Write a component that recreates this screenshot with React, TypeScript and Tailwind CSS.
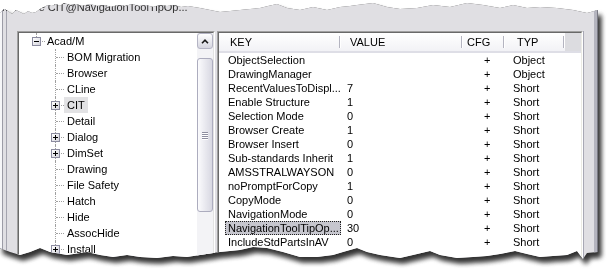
import React from "react";

type TreeItem = { label: string; level: 0 | 1; box?: "plus" | "minus"; hl?: boolean };

const tree: TreeItem[] = [
  { label: "Acad/M", level: 0, box: "minus" },
  { label: "BOM Migration", level: 1 },
  { label: "Browser", level: 1 },
  { label: "CLine", level: 1 },
  { label: "CIT", level: 1, box: "plus", hl: true },
  { label: "Detail", level: 1 },
  { label: "Dialog", level: 1, box: "plus" },
  { label: "DimSet", level: 1, box: "plus" },
  { label: "Drawing", level: 1 },
  { label: "File Safety", level: 1 },
  { label: "Hatch", level: 1 },
  { label: "Hide", level: 1 },
  { label: "AssocHide", level: 1 },
  { label: "Install", level: 1, box: "plus" },
];

const rows: { k: string; v: string; t: string; sel?: boolean }[] = [
  { k: "ObjectSelection", v: "", t: "Object" },
  { k: "DrawingManager", v: "", t: "Object" },
  { k: "RecentValuesToDispl...", v: "7", t: "Short" },
  { k: "Enable Structure", v: "1", t: "Short" },
  { k: "Selection Mode", v: "0", t: "Short" },
  { k: "Browser Create", v: "1", t: "Short" },
  { k: "Browser Insert", v: "0", t: "Short" },
  { k: "Sub-standards Inherit", v: "1", t: "Short" },
  { k: "AMSSTRALWAYSON", v: "0", t: "Short" },
  { k: "noPromptForCopy", v: "1", t: "Short" },
  { k: "CopyMode", v: "0", t: "Short" },
  { k: "NavigationMode", v: "0", t: "Short" },
  { k: "NavigationToolTipOp...", v: "30", t: "Short", sel: true },
  { k: "IncludeStdPartsInAV", v: "0", t: "Short" },
];

function Box({ kind }: { kind: "plus" | "minus" }) {
  return (
    <div className="absolute left-[5px] top-[4px] w-[9px] h-[9px] border border-[#8c8ca0] bg-gradient-to-br from-white to-[#d4d4dc]">
      <div className="absolute left-[1px] top-[3px] w-[5px] h-px bg-black" />
      {kind === "plus" && <div className="absolute left-[3px] top-[1px] w-px h-[5px] bg-black" />}
    </div>
  );
}

function TreeRow({ item }: { item: TreeItem }) {
  const root = item.level === 0;
  return (
    <div className="flex h-[16px] items-stretch">
      <div className={root ? "w-[8px] shrink-0" : "w-[27px] shrink-0"} />
      <div className="relative w-[18px] shrink-0">
        <div
          className={
            root
              ? "absolute left-[9px] top-0 h-[8px] border-l border-dotted border-[#a0a0a0]"
              : "absolute left-[9px] top-0 bottom-0 border-l border-dotted border-[#a0a0a0]"
          }
        />
        <div className="absolute left-[10px] right-0 top-[8px] border-t border-dotted border-[#a0a0a0]" />
        {item.box && <Box kind={item.box} />}
      </div>
      <span
        className={
          (root ? "pl-[2px] pr-[3px]" : "pl-[3px] pr-[3px]") +
          " leading-[16px] whitespace-nowrap text-black" +
          (item.hl ? " bg-[#e2e2e4]" : "")
        }
      >
        {item.label}
      </span>
    </div>
  );
}

function Sep() {
  return (
    <div className="w-[2px] h-[12px] self-center shrink-0 border-l border-[#b4b4c0] bg-white" />
  );
}

export default function App() {
  return (
    <div className="relative w-[607px] h-[271px] bg-white overflow-hidden font-['Liberation_Sans',Arial,sans-serif] text-[11px] text-black">
      <div className="w-[598px] h-[262px] [filter:drop-shadow(3px_5px_2.5px_rgba(0,0,0,0.65))_drop-shadow(0_0_0.6px_rgba(0,0,0,0.7))]">
        <div className="w-[598px] h-[262px] overflow-hidden bg-[#e0dfe3] flex flex-col shadow-[inset_2px_0_0_#f6f6f8,inset_3px_0_0_#9c9ca6,inset_6px_0_0_#e0dfe3,inset_7px_0_0_#a4a4ae,inset_-1px_0_0_#7a7a84,inset_-4px_0_0_#b4b4be] [clip-path:polygon(0_13px,4px_9px,8px_11px,12px_14px,16px_10px,20px_12px,24px_14px,28px_11px,32px_13px,36px_12px,40px_9px,44px_7px,48px_5px,52px_6px,56px_4px,60px_6px,64px_3px,70px_5px,76px_4px,82px_6px,90px_4px,97px_6px,104px_5px,111px_7px,118px_5px,125px_6px,132px_4px,139px_6px,146px_5px,153px_7px,160px_5px,167px_6px,174px_5px,181px_7px,188px_6px,200px_8px,210px_10px,220px_12px,230px_11px,240px_10px,250px_9px,260px_8px,268px_6px,277px_4px,287px_8px,300px_10px,313px_7px,327px_10px,340px_7px,350px_6px,357px_5px,365px_4px,373px_3px,387px_7px,400px_9px,417px_8px,433px_5px,450px_7px,467px_3px,483px_5px,500px_8px,513px_5px,527px_8px,540px_7px,557px_8px,573px_10px,587px_13px,598px_10px,598px_252px,587px_253px,583px_259px,577px_251px,567px_255px,553px_256px,540px_257px,527px_254px,515px_251px,500px_254px,487px_256px,473px_257px,457px_258px,440px_255px,430px_251px,413px_255px,400px_258px,393px_257px,380px_255px,367px_252px,357px_248px,343px_252px,333px_255px,317px_257px,300px_257px,283px_252px,267px_248px,253px_247px,240px_250px,220px_252px,200px_255px,187px_257px,173px_256px,157px_258px,140px_257px,127px_255px,113px_257px,100px_255px,87px_252px,67px_255px,50px_252px,40px_248px,30px_252px,20px_255px,10px_252px,0_248px)]">
          {/* title strip */}
          <div className="h-[31px] shrink-0 pl-[2px] pt-[1px] leading-[13px] text-[#2e2e2e] whitespace-nowrap">
            Measure CIT@NavigationToolTipOp...
          </div>

          {/* panels */}
          <div className="flex items-start pl-[17px] gap-[2px]">
            {/* tree panel */}
            <div className="w-[198px] h-[240px] shrink-0 border border-t-[#a0a0a0] border-l-[#a0a0a0] border-r-white border-b-white">
              <div className="h-full flex border border-t-[#696969] border-l-[#696969] border-r-[#e3e3e3] border-b-[#e3e3e3] bg-white">
                <div className="flex-1 flex flex-col">
                  {tree.map((it) => (
                    <TreeRow key={it.label} item={it} />
                  ))}
                </div>
                {/* scrollbar */}
                <div className="w-[16px] shrink-0 flex flex-col bg-[#f3f3f6]">
                  <div className="h-[16px] shrink-0 rounded-[3px] border border-[#b4b4c4] bg-gradient-to-b from-white to-[#d6d6e0] flex items-center justify-center">
                    <svg width="8" height="5" viewBox="0 0 8 5">
                      <path d="M1 4.2 L4 1.2 L7 4.2" stroke="#1a1a1a" strokeWidth="1.6" fill="none" />
                    </svg>
                  </div>
                  <div className="h-[9px] shrink-0" />
                  <div className="h-[154px] shrink-0 rounded-[3px] border border-[#acacbe] bg-gradient-to-r from-[#fbfbfd] to-[#d8d8e2] flex flex-col items-center justify-center gap-px">
                    <div className="w-[6px] h-px bg-[#8e8ea0] shadow-[0_1px_0_#ffffff]" />
                    <div className="w-[6px] h-px bg-[#8e8ea0] shadow-[0_1px_0_#ffffff]" />
                    <div className="w-[6px] h-px bg-[#8e8ea0] shadow-[0_1px_0_#ffffff]" />
                    <div className="w-[6px] h-px bg-[#8e8ea0] shadow-[0_1px_0_#ffffff]" />
                  </div>
                </div>
              </div>
            </div>

            {/* list panel */}
            <div className="w-[366px] h-[240px] shrink-0 border border-t-[#a0a0a0] border-l-[#a0a0a0] border-r-white border-b-white shadow-[1px_0_0_#a8a8b4]">
              <div className="h-full flex flex-col border border-t-[#696969] border-l-[#696969] border-r-[#ecebe4] border-b-[#e3e3e3] bg-white">
                {/* header */}
                <div className="flex h-[20px] shrink-0 bg-gradient-to-b from-white to-[#f2f2f6] border-b-2 border-[#dedee6]">
                  <div className="w-[120px] pl-[11px] flex items-center">KEY</div>
                  <Sep />
                  <div className="w-[120px] pl-[9px] flex items-center">VALUE</div>
                  <Sep />
                  <div className="w-[40px] pl-[4px] flex items-center">CFG</div>
                  <Sep />
                  <div className="w-[58px] pl-[12px] flex items-center">TYP</div>
                  <Sep />
                  <div className="flex-1 bg-[#dcdce0]" />
                </div>
                {/* rows */}
                {rows.map((r) => (
                  <div key={r.k} className="flex h-[14px] shrink-0 leading-[14px] whitespace-nowrap">
                    <div className="w-[122px] pl-[6px] flex h-full">
                      {r.sel ? (
                        <span className="w-full pl-[2px] leading-[12px] bg-[#c6c6ce] border border-dotted border-[#202020]">
                          {r.k}
                        </span>
                      ) : (
                        <span className="pl-[3px]">{r.k}</span>
                      )}
                    </div>
                    <div className="w-[122px] pl-[6px]">{r.v}</div>
                    <div className="w-[42px] pl-[21px]">+</div>
                    <div className="w-[60px] pl-[8px]">{r.t}</div>
                  </div>
                ))}
              </div>
            </div>
          </div>
        </div>
      </div>
    </div>
  );
}
